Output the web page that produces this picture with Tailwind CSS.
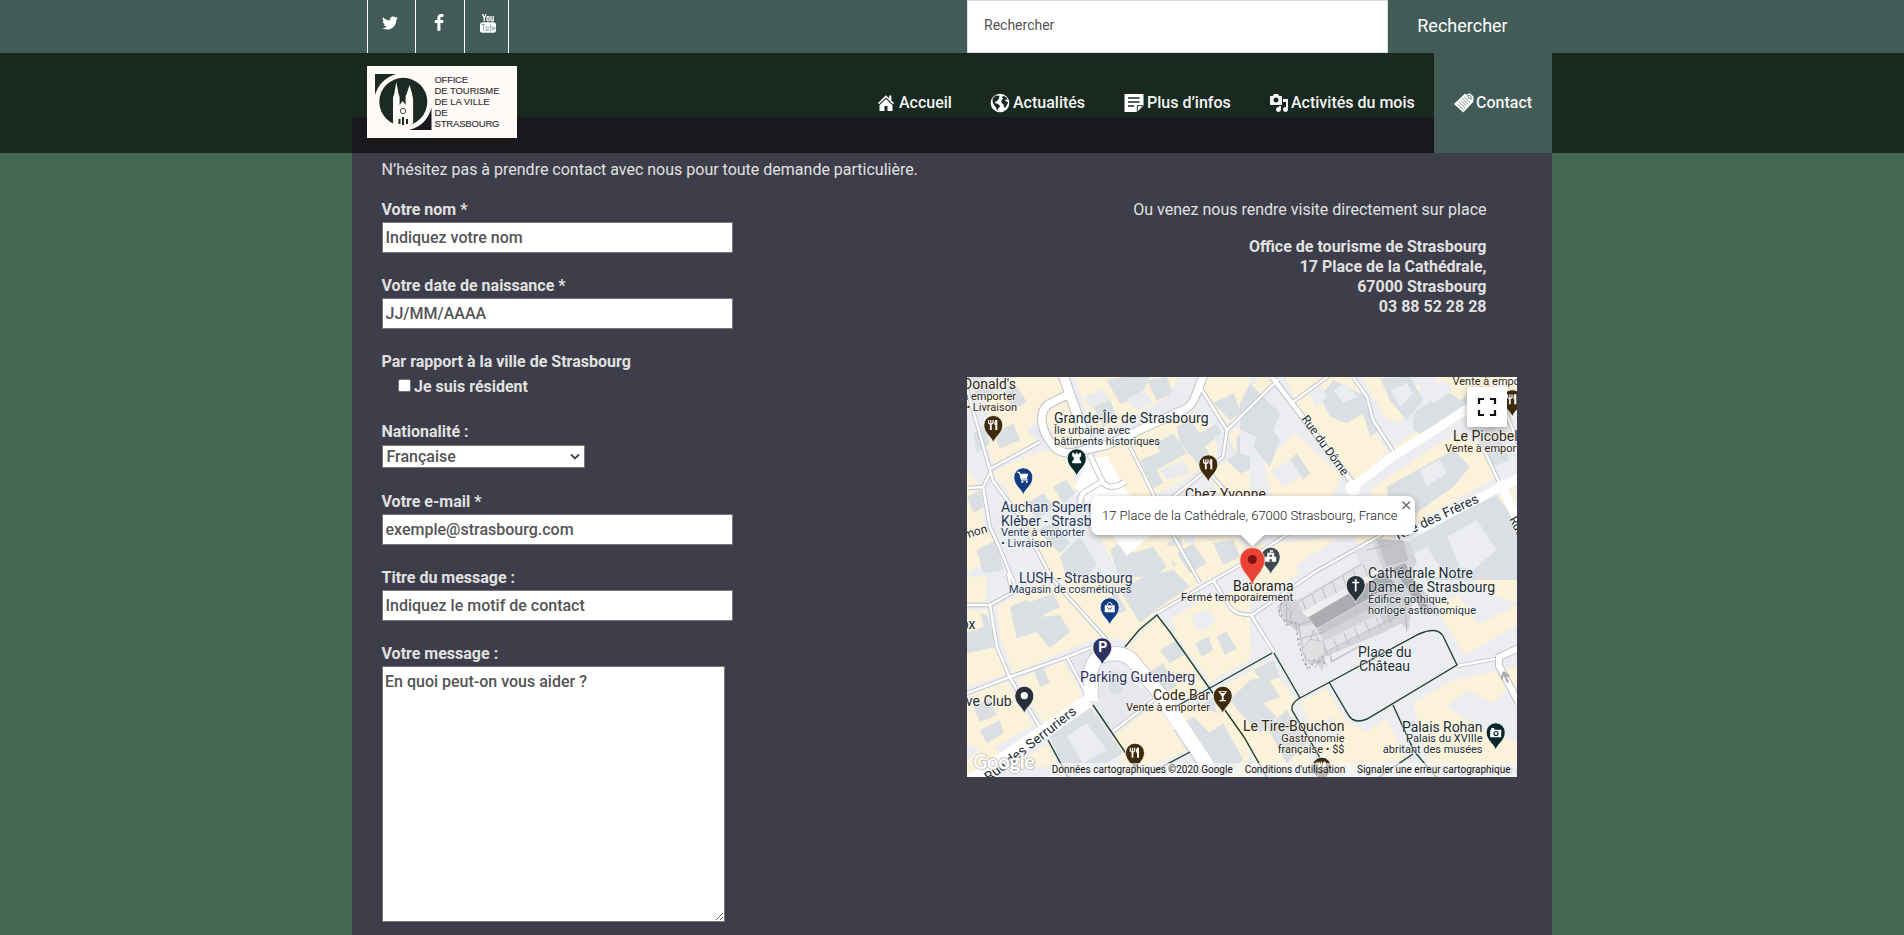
<!DOCTYPE html>
<html lang="fr">
<head>
<meta charset="utf-8">
<title>Contact – Office de tourisme de Strasbourg</title>
<script src="https://cdn.jsdelivr.net/npm/@tailwindcss/browser@4"></script>
</head>
<body class="h-[935px] overflow-hidden bg-[#426852] font-['Roboto',sans-serif] text-base leading-5 text-[#e1e1e1]">

<!-- Top bar -->
<div class="h-[53px] bg-[#425b56]">
  <div class="mx-auto flex h-full w-[1200px] pl-[15px]">
    <div class="flex h-full w-[142px] border-r border-white text-white">
      <a class="flex w-12 justify-center border-l border-white pt-[14px] pr-[3px]"><svg class="h-[18px] w-[18px]" viewBox="0 0 1792 1792" fill="currentColor"><path d="M1684 408q-67 98-162 167 1 14 1 42 0 130-38 259.500t-115.500 248.500-184.500 210.500-258 146-323 54.500q-271 0-496-145 35 4 78 4 225 0 401-138-105-2-188-64.500t-114-159.500q33 5 61 5 43 0 85-11-112-23-185.500-111.500t-73.500-205.500v-4q68 38 146 41-66-44-105-115t-39-154q0-88 44-163 121 149 294.500 238.500t371.500 99.500q-8-38-8-74 0-134 94.500-228.500t228.500-94.500q140 0 236 102 109-21 205-78-37 115-142 178 93-10 186-50z"/></svg></a>
      <a class="flex w-[49px] justify-center border-l border-white pt-[14px] pr-[2px]"><svg class="h-[18px] w-[18px]" viewBox="0 0 1792 1792" fill="currentColor"><path d="M1343 12v264h-157q-86 0-116 36t-30 108v189h293l-39 296h-254v759h-306v-759h-255v-296h255v-218q0-186 104-288.500t277-102.500q147 0 228 12z"/></svg></a>
      <a class="flex flex-1 justify-center border-l border-white pt-[13px]"><svg class="ml-[2px] h-5 w-4" viewBox="0 0 16 20" fill="none"><path d="M2.500 1 4.300 5V8.300M6 1 4.300 5" stroke="#fff" stroke-width="1.300"/><rect x="7" y="3.300" width="2.200" height="4.500" rx="1.100" stroke="#fff" stroke-width="1.200"/><path d="M11 3v4.100q.2 1.200 1.900.1M13.200 3v5.300" stroke="#fff" stroke-width="1.300"/><rect y="9.200" width="16" height="10.500" rx="2.500" fill="#fff"/><path d="M1.500 11.500h3.800M3.400 11.500V18M6.200 13v4.200q.5 1 1.800 0M8.100 13v5M10.300 11v7M10.400 13.700q1.800-1 1.800.8v2q-.2 1.500-1.800.8M13.500 15.400h1.500v-.8q-.7-1.800-1.500 0v2q.7 1.800 1.500 0" stroke="#6f8c9c" stroke-width=".7"/></svg></a>
    </div>
    <form class="ml-auto flex h-full w-[585px]">
      <input class="h-full w-[421px] border border-[#d8dedc] bg-white pb-1 pl-4 text-sm leading-5 text-[#555] placeholder:text-[#555]" placeholder="Rechercher">
      <button type="button" class="h-full w-[149px] pb-[2px] text-lg text-white">Rechercher</button>
    </form>
  </div>
</div>

<!-- Header with navigation -->
<header class="relative z-10 h-[100px] bg-black/60">
  <div class="mx-auto flex h-full w-[1200px] items-start pl-[15px]">
    <svg class="mt-[13px] h-[72px] w-[150px]" viewBox="0 0 150 72">
      <path fill="#fffaf8" d="M0 0h150v72H0z"/>
      <path fill="#1b2a22" d="M8 8h21Q13 13 8 29z"/><path fill="#18191d" d="M64.500 42v22H42Q59 60 64.500 42z"/>
      <circle cx="36.300" cy="35.800" r="24" fill="#1b2a22"/>
      <path fill="#fffaf8" d="M26 57V31l1-2 2.300-13 2.500 13 .8 2v8l3-4 3 4v-9l1-2 3-9 2.500 9 1 5v24q-6 5-12 5-5 0-8.100-5z"/>
      <circle cx="36" cy="45" r="2.700" fill="none" stroke="#1b2a22" stroke-width=".8"/>
      <path d="M32.500 58v-5M36 59v-8M40 58v-5" stroke="#1b2a22" stroke-width="2"/>
      <g font-family="Liberation Sans, sans-serif" font-size="9.500" fill="#333" stroke="#333" stroke-width=".15">
        <text x="67.500" y="16.700" textLength="33.500">OFFICE</text><text x="67.500" y="27.700" textLength="65">DE TOURISME</text><text x="67.500" y="38.700" textLength="55">DE LA VILLE</text><text x="67.500" y="49.700" textLength="13">DE</text><text x="67.500" y="60.700" textLength="65">STRASBOURG</text>
      </g>
    </svg>
    <nav class="ml-auto flex h-full font-medium text-[#f2f4f3]">
      <a class="flex w-[114px] items-center gap-[3px] pl-5"><svg class="h-5 w-5" viewBox="0 0 20 20"><path fill="#fff" d="M15.300 2.500v5L18 10.100l-1 1.200L10 4.500l-7 6.800-1-1.200L10 2.300l3.200 3.100V2.500z"/><path fill="#fff" d="M10 6l6.500 6.200V18h-5v-5h-3v5h-5v-5.800z"/></svg>Accueil</a>
      <a class="flex w-[134px] items-center gap-[3px] pl-5"><svg class="h-5 w-5" viewBox="0 0 20 20"><circle cx="10" cy="10" r="9.300" fill="#fff"/><path fill="#1b2a22" d="m2.500 6.500 1.300-2.600L6.500 2.300l1.400.8 1.300-.6.500.8-1 1.200.8.8-1.200.9-1.200 1.800-1.700.7-.9 1.400 2.300.4 2.600 1.500.6 1.200-1 1.500-1.400 1.600.2 1.500-1-.8-.9-2.500-1.800-2.200-1.200-2.200zM11.700 3.700l2.400-.7 2 1.200 1.500 2.500-1.300-.3-1.200.7.300 1.200 2.200.3.200 2-1.700 2.800-1.400 1.400-.9-.7-.2-2.500-1.700-1.300-.7-2 .8-1.700 1.300-.6-1-1z"/></svg>Actualités</a>
      <a class="flex w-[145px] items-center gap-[3px] pl-5"><svg class="h-5 w-5" viewBox="0 0 20 20"><path fill="#fff" d="M.5 1h19v11.500L13 19H.5z"/><path d="M4 5h11.500M4 9h11.500M4 13h6" stroke="#1b2a22" stroke-width="1.300"/><path d="M19 12.700h-5.700V19" fill="none" stroke="#1b2a22"/></svg>Plus d’infos</a>
      <a class="flex w-[185px] items-center gap-[2px] pl-5"><svg class="h-5 w-5" viewBox="0 0 20 20" fill="currentColor"><path d="M13 11V4c0-.55-.45-1-1-1h-1.670L9 1H5L3.670 3H2c-.55 0-1 .45-1 1v7c0 .55.450 1 1 1h10c.55 0 1-.45 1-1zM7 4.500c1.380 0 2.500 1.120 2.500 2.500S8.380 9.500 7 9.500 4.500 8.380 4.500 7 5.620 4.500 7 4.500zM14 6h5v10.500c0 1.380-1.120 2.500-2.500 2.500S14 17.880 14 16.500s1.120-2.500 2.500-2.500c.17 0 .34.020.5.050V9h-3V6zm-4 8.050V13h2v3.500c0 1.380-1.120 2.500-2.500 2.500S7 17.880 7 16.500 8.120 14 9.500 14c.17 0 .34.020.5.050z"/></svg>Activités du mois</a>
      <a class="flex w-[118px] items-center gap-[2px] bg-[#425b56] pl-5"><svg class="h-5 w-5" viewBox="0 0 20 20"><path fill="#fff" d="M0 11 10.500 1l3.300.5L15.500 0 19.500 3.500l-.3 5.500L9.200 19.500z"/><path d="m3.600 11 5.600 5.600M5.300 9.300l5.600 5.600M7 7.600l5.600 5.500M8.700 5.900l5.600 5.500M10.400 4.200 16 9.700" fill="none" stroke="#425b56" stroke-width=".7"/><path d="m13.500 2.500 3.300.3.700 3.200-2.400-.3z" fill="none" stroke="#425b56" stroke-width=".7"/></svg>Contact</a>
    </nav>
  </div>
</header>

<!-- Page content -->
<main class="mx-auto -mt-9 h-[818px] w-[1200px] bg-[#3d3e49] pt-[43px] pr-[35px] pl-[29px]">
  <p class="pl-[.5px]">N’hésitez pas à prendre contact avec nous pour toute demande particulière.</p>
  <div class="mt-5 flex justify-between">
    <form class="flex w-[360px] flex-col pl-[.5px] font-bold">
      <label>Votre nom *</label>
      <input class="mt-[2px] ml-[.5px] h-[31px] w-[351px] border border-[#767676] bg-white px-[2.500px] font-medium placeholder:text-[#555]" placeholder="Indiquez votre nom">
      <label class="mt-[23px]">Votre date de naissance *</label>
      <input class="mt-[2px] ml-[.5px] h-[31px] w-[351px] border border-[#767676] bg-white px-[2.500px] font-medium placeholder:text-[#555]" placeholder="JJ/MM/AAAA">
      <label class="mt-[23px]">Par rapport à la ville de Strasbourg</label>
      <label class="mt-[5px] flex items-center gap-[3px] pl-[16.500px]"><input type="checkbox" class="mt-[-3px] h-[13px] w-[13px] appearance-none rounded-[2px] border border-[#767676] bg-white">Je suis résident</label>
      <label class="mt-[25px]">Nationalité :</label>
      <div class="mt-[3px] ml-[.5px] flex h-[23px] w-[203px] items-center justify-between border border-[#767676] bg-white pr-[4px] pl-[3.500px] font-medium text-[#555]"><span>Française</span><svg class="h-2 w-[10px]" viewBox="0 0 10 8"><path d="m1 1.500 4 4 4-4" fill="none" stroke="#444" stroke-width="1.800"/></svg></div>
      <label class="mt-6">Votre e-mail *</label>
      <input class="mt-[2px] ml-[.5px] h-[31px] w-[351px] border border-[#767676] bg-white px-[2.500px] font-medium placeholder:text-[#555]" placeholder="exemple@strasbourg.com">
      <label class="mt-[23px]">Titre du message :</label>
      <input class="mt-[2px] ml-[.5px] h-[31px] w-[351px] border border-[#767676] bg-white px-[2.500px] font-medium placeholder:text-[#555]" placeholder="Indiquez le motif de contact">
      <label class="mt-[23px]">Votre message :</label>
      <textarea class="mt-[2px] ml-[.5px] h-[256px] w-[343px] resize border border-[#767676] bg-white px-[2px] py-[5px] font-medium placeholder:text-[#555]" placeholder="En quoi peut-on vous aider ?"></textarea>
    </form>

    <div class="w-[550px]">
      <div class="pr-[30.500px] text-right">
        <p>Ou venez nous rendre visite directement sur place</p>
        <p class="mt-[17px] font-bold">Office de tourisme de Strasbourg<br>17 Place de la Cathédrale,<br>67000 Strasbourg<br>03 88 52 28 28</p>
      </div>
      <div class="relative mt-[60px] h-[400px] w-[550px] overflow-hidden">
        <svg class="block h-[400px] w-[550px]" viewBox="0 0 550 400" font-family="Roboto, sans-serif">
          <defs>
            <g id="pin"><path d="M0 18C-1.500 11.500-9.500 8.500-9.500 0A9.500 9.500 0 1 1 9.500 0C9.500 8.500 1.500 11.500 0 18z" stroke="#fff" stroke-width=".8"/></g>
            <g id="fork" fill="none" stroke="#fff"><path d="M-2.500-1V5" stroke-width="1.800"/><path d="M-4.700-5v3.200q2.200 2.400 4.400 0V-5M-2.500-5v4" stroke-width="1.200"/><path d="M3-5V5" stroke-width="2"/><path d="M2.500-5q-1.500 2-.8 5" stroke-width="1"/></g>
            <filter id="sh" x="-20%" y="-50%" width="140%" height="220%"><feDropShadow dx="0" dy="2" stdDeviation="3" flood-opacity=".35"/></filter>
          </defs>
          <path fill="#ecedf0" d="M0 0h550v400H0z"/>

          <!-- commercial blocks, north-west -->
          <g transform="translate(-7 -7) scale(.33333)">
            <path fill="#fbf2d9" d="M60 60 170 21h120l25 45-85 50 10 90-140 80-20-70 40-20-45-110zM95 310l100-50 90-25 55 60 10 60-60 50-60-20-30 60-40-30-20-60zM21 300l40 50 10 110 50 90-100 60zM255 120l80-30 30 130-60 20-40-60zM345 21h310l-30 60-200 110-30-20zM390 260l250-110 60-20 80 50-10 80-130 90-160 60-60-60zM735 21h135v100l-70 40-70-100zM810 190l60-40v250h-80l-40-80 50-60zM420 500h250l60 130H560l-100-50zM180 440l90 60 120 130H270zM700 500h130l40 50-130 80z"/>
            <path fill="#dadfe3" d="M21 21h45l40 50-50 20zM120 60l40-25 40 60-40 25zM100 190l60-30 20 50-60 25zM440 30l50-9h80l-30 60-60 20zM560 30l60-9 20 50-50 20zM400 110l50-20 20 50-40 30zM540 270l60-25-10-25 50-30 40 60-90 50 20 40-30 15zM650 170l40-20 30 40 50-30 15 30-50 40 25 40-40 20-60-70zM760 100l60-30 25 60-35 20zM830 200l40-20v120l-30 10-40-40 30-25zM40 190l30-20 20 50-40 30zM200 400l50-30 30 40-50 40zM280 350l40-20 25 40-35 30zM230 480l50-20 50 60-30 30zM300 560l60-60 50 80-30 50h-60zM450 540l50-40 20 50 60-20 40 60-50 40h-90zM620 520l40-20 30 70-50 20zM21 380l40-20 10 50-30 20zM50 540l60-30 20 90-60 10zM730 560l50-30 20 40-50 30z"/>
            <path fill="#e9ebee" d="M200 180l50-40 35 60-50 20zM370 80l60-20 20 30-60 20zM500 90l50-30 30 40-50 20zM600 300l70-30 20 40-70 20zM80 450l60-30 20 60-60 20zM420 430l50-20 20 40-40 20zM640 60l40 10-30 50-60 30-10-30zM100 60l20-30 30 10-20 40zM760 200l40-10 30 60-40 30z"/>
          </g>
          <path fill="#fff" d="m108 110 12-27 20-4 18 33 32 40-30 27-25-35z"/>

          <!-- north-east -->
          <g transform="translate(273 -7) scale(.33333)">
            <path fill="#fbf2d9" d="M0 90 60 21h20l30 20L0 140zM135 21h200l40 70 20 80 50 75-85 75-30 10-140-190zM365 21h60l120 30-20 50-50 60-40-20zM590 21h241v60l-70 10-210 120-50 30-40-10 130-90zM75 280l90-90 140 130-30 60-180 10zM390 360l190-130 80-40 80 60 30 70-210 120-70 50H430zM440 490l20 20-70 60-50-70zM600 510l50-30-20-20 200-110v350l-100-40zM0 530l300-30-170 110-50-30z"/>
            <path fill="#dadfe3" d="M0 100l30-60 90 90-20 50 20 30-30 80-50-60H0zM240 80l40-50 100 50-10 50-50 30-50-20zM360 100l30 10 30 70-30 20zM420 25l90-4 40 70-50 60-50-60zM520 130l100-70 40 30 60-30 30 30-190 110-40-20zM150 270l20-20 40 60-20 20zM440 350l200-110 50 50-50 60-140 100-50-20zM700 190l60-20 50 100-50 20zM480 530l230-130 50-40 71 100v170H560zM310 90l30-15 30 35-40 30z"/>
            <path fill="#ecedf0" d="M280 60l40-20 30 40-40 20zM450 60l50-20 20 30-40 40zM540 300l60-30 20 40-60 40zM620 500l90-50 60 90-70 60-40-10zM510 560l50-30 60 90h-70zM0 180l50 20-20 60-30-10zM200 60l40-20 20 40-30 30zM560 60l50-30 30 30-60 40zM90 300l60-30 30 50-50 30z"/>
          </g>

          <!-- south-west -->
          <g transform="translate(-7 193) scale(.33333)">
            <path fill="#fbf2d9" d="M21 20h60l-5 75-55 5zM110 110l130-70 50 10 130 150-120 50-140 60-40-110zM21 120h60l20 100 35 95-115 35zM21 380l120-45 80 130-140 80-60-20zM170 330l140-55 55 90-15 50-100 40zM290 20h420l20 15-150 100-70 80-50-10-30 5zM500 240l90-100 50 60 100 150-80 40-90-50zM640 190l60-70 170-80v230l-120 60zM620 420l240-20 10 220h-90zM440 520l140-120 110 140-180 70-40-60zM21 570l60-50 60 40-90 60H21zM170 580l90-60 40 70h-130z"/>
            <path fill="#dadfe3" d="M21 190l50-20-10-40 20 5 30 95-90 20zM150 110l50-20 50 50 50-5 30 50-60 50-40-50-60 20zM200 100l80-30 20 40-60 30zM480 60l70-40 90-20 50 50-90 60-60 50zM430 90l40-20 30 50-40 20zM600 240l50-30 30 40-50 30zM700 230l50-40 30 60-60 20zM730 240l60-30 30 40-60 30zM270 500l120-90 100 140-70 40H310zM640 480l60-40 60 60-10 50 50 70h-70zM560 310l50-30 40 70-50 20zM40 410l50-25 20 50-50 20zM60 480l60-30 10 40-50 30zM220 300l30-10 20 50-30 10z"/>
            <path fill="#ecedf0" d="M320 500l60-40 60 80-70 40zM690 150l60-35 30 50-60 30zM460 400l60-50 60 60-100 70z"/>
            <path fill="#e6e8eb" d="M335 270l60-30 20 50-40 50zM420 330l50-40 100 90-130 110-30-60z"/><circle cx="467" cy="350" r="21" fill="#dadfe3"/>
          </g>

          <!-- south-east -->
          <g transform="translate(153 163) scale(.33333)">
            <path fill="#fbf2d9" d="M150 240l120-80 130 170-130 100zM130 20l220-20 10 70-90 45-60 20zM380 100l120-60 40 60-140 90zM280 455l160-90 90 120-20 30 70 170H430l-60-110zM540 485l80-40 60 100 60 30 60-40 60 120-220 40zM880 490l120-70 300-60v330H930zM945 200l70-35 60 90 150-80v60l-190 110z"/>
            <path fill="#dadfe3" d="M170 40l50-30 40 60-50 30zM280 10l60-10 20 50-50 25zM225 310l40-20 15 40-35 20zM290 290l30-15 30 50-35 20zM330 480l60-60 50-10 40 60-50 20 40 40-50 50-60-60zM400 390l60-30 20 50-50 20zM440 560l60-50 60 100-60 60zM250 590l60-40 60 110-40 30h-50zM240 500l40-30 10 50z"/>
            <path fill="#ecedf0" d="M210 230l50-25 30 40-50 30zM980 500l60-50 80 40 60-60 120 90-100 90-110-40zM560 560l80-30 30 60-80 30z"/>
          </g>

          <!-- streets: grey casing then white surface -->
          <g fill="none" stroke-linejoin="round">
            <g stroke="#bfc3c7">
              <path stroke-width="11" d="M96-3 103 18 122 70"/>
              <path stroke-width="9.500" d="M104 16 84 26Q74 30 75 45 77 58 85 67 92 77 105 76L140 68 218 32Q226 28 230 15L237-3"/>
              <path stroke-width="4.300" d="M-2 5 23 93 26 104 53 140 85 202 140 263M1 111l15-1 7-14M16 110l7 40 10 22 14 34M-2 228h25l22-12-4-20M23 228l7 42 13 31 30 49M-2 317l45-17 57-20 36-14M100 280l18 34M23 92l50-27M233 10l27 43-4 27-50 40M260 53 312 2M243 96l22 26M163 70l15 30 28 58 27 48M326 25 363-2M386 0l14 20 6 23 20 31M190 236l83-48 80-52M246 203l17 27q5 8 22 8l63-43 75-42M284 238l23 37M145 355l42-32M490 289l38-7M518 75l14 30M538 33l16 40"/>
              <path stroke-width="6.500" d="M305 0 385 105M123 78l13 28M113 130q-1-14 8-17l15-9M136 106q8 8 22-1"/>
              <path stroke-width="15" d="M124 321v-27q2-14 15-16 20-5 30 10l24 29"/>
              <path stroke-width="8" d="m552 271-20 9 0 9 20 37"/>
            </g>
            <g stroke="#fff">
              <path stroke-width="9" d="M96-3 103 18 122 70"/>
              <path stroke-width="7.500" d="M104 16 84 26Q74 30 75 45 77 58 85 67 92 77 105 76L140 68 218 32Q226 28 230 15L237-3"/>
              <path stroke-width="2.500" d="M-2 5 23 93 26 104 53 140 85 202 140 263M1 111l15-1 7-14M16 110l7 40 10 22 14 34M-2 228h25l22-12-4-20M23 228l7 42 13 31 30 49M-2 317l45-17 57-20 36-14M100 280l18 34M23 92l50-27M233 10l27 43-4 27-50 40M260 53 312 2M243 96l22 26M163 70l15 30 28 58 27 48M326 25 363-2M386 0l14 20 6 23 20 31M190 236l83-48 80-52M246 203l17 27q5 8 22 8l63-43 75-42M284 238l23 37M145 355l42-32M490 289l38-7M518 75l14 30M538 33l16 40"/>
              <path stroke-width="4.500" d="M305 0 385 105M123 78l13 28M113 130q-1-14 8-17l15-9M136 106q8 8 22-1"/>
              <path stroke-width="9" d="M386 110 425 80 463 56 500 32 552-2M430 163l122-62M533 104l22 50"/>
              <path stroke-width="13.500" d="M3 405 121 324M124 324v-30q2-14 15-16 20-5 30 10l24 29 50 75"/>
              <path stroke-width="6" d="m552 271-20 9 0 9 20 37"/>
            </g>
            <circle cx="386" cy="111" r="7.500" fill="#fff"/>
            <path d="m534.500 302.500 2-7 5.500 4M536.500 295.500l4.500 10" stroke="#a7aaae" stroke-width="2.200"/>
          </g>

          <!-- cathedral in relief -->
          <g transform="translate(153 163) scale(.33333)">
            <path fill="#d3d4d9" d="M470 200l35-25 30 5 190-110-5-40 60-35 90 10 20 60-20 40 95 110-15 15-70-50-15 90-20-20-60 30-170 70-8 45-15-25-25 5-20-45-10-50-35-30z"/>
            <path fill="#e3e3e7" d="M530 180l210-120 20 30-210 130zM600 310l230-115 15 28-225 115zM700 30l60-20 30 80-50 20zM540 260l55-10 20 75-45 35-30-30z"/>
            <path fill="#ababb2" d="M560 225l230-130 35 35-235 135zM820 85l35-15 80 150-20 5z"/>
            <path fill="#f0efef" d="M545 218l230-132 15 14-225 132z"/>
            <path fill="#c6c6cc" d="M590 268l235-132 10 22-232 126z"/>
            <path fill="#c2c3c9" d="M770 0h80l15 60-65 20z"/>
            <path fill="#cfd0d5" d="M775 215l80-50 10 50-70 45z"/>
            <g fill="none" stroke="#b3b4bb" stroke-width="2.500"><path d="M545 175l12 35M575 160l12 33M606 143l12 33M637 126l12 33M668 108l12 33M700 90l12 33M730 73l12 33M610 310l14 36M640 296l14 34M672 280l14 34M704 264l14 34M736 247l14 34M768 231l14 34M800 215l14 34"/><path d="M485 185l-8 40 30 30 8-40zM500 180v70M490 240l45 10 8 50 20 90M560 350l20-80 30 60-25 55M520 260l60-20M530 300l85-25M590 370l20-12 10 20M800 195l55-20 5 100M740 30l90-20M533 186 725 72M612 338l220-110"/><path d="m630 340 5 25 85-48" stroke="#c6c7cc" stroke-width="5"/></g>
            <path fill="#dfe1e1" stroke="#b5b6bb" stroke-width="2" d="M545 330l25-32 40 7 6 35-30 25-25-5z"/>
            <path fill="none" stroke="#a6a7ae" stroke-width="4" stroke-dasharray="7 9" d="M475 210l25 45 25-10 12 70 15 55 20 15 10-25 30 10-5-30M510 170l-30 25"/>
          </g>

          <!-- pedestrian limits -->
          <g fill="none" stroke="#21442f" stroke-width="1.400">
            <path d="m158 270 14-17 18-15 13 17 40 57 17 24 17 24 25 44"/>
            <path d="m305 276-62 35-33 18M307 276l26 45M356 386l-31-53q-1-7 8-12l28-15 91-49q18-8 24 2l14 29-90 54q-12 5-18-3l-20-34M426 328l21 46 22 26M446 377l-34 23M126 328l34 50M81 363l20 37M223 375l-36 19"/>
          </g>

          <!-- markers -->
          <g>
            <g transform="translate(26.300 48)" fill="#3f2a09"><use href="#pin"/><use href="#fork"/></g>
            <g transform="translate(241.300 87.300)" fill="#3f2a09"><use href="#pin"/><use href="#fork"/></g>
            <g transform="translate(545.300 22.300)" fill="#3f2a09"><use href="#pin"/><use href="#fork"/></g>
            <g transform="translate(168 375.700)" fill="#3f2a09"><use href="#pin"/><use href="#fork"/></g>
            <g transform="translate(354.700 389.700)" fill="#3f2a09"><use href="#pin"/><use href="#fork"/></g>
            <g transform="translate(109.700 81.300)" fill="#04282c"><use href="#pin"/><path fill="#fff" d="M-4.500-5.500h2v1.500h1.500v-1.500h2v1.500h1.500v-1.500h2v3.500l-1.500 1v2.500l1.500 1.500v2h-9v-2l1.500-1.500V-1l-1.500-1z"/></g>
            <g transform="translate(56.300 100.300)" fill="#123b80"><use href="#pin"/><path fill="#fff" d="M-3.500-3.500h8.500l-1.500 5h-6z"/><path d="M-6-5h2l2.500 7.500h6" fill="none" stroke="#fff" stroke-width="1.200"/><circle cx="-1" cy="4.500" r="1.100" fill="#fff"/><circle cx="3.500" cy="4.500" r="1.100" fill="#fff"/></g>
            <g transform="translate(303.700 179.700)" fill="#3e4a4d"><use href="#pin"/><path fill="#fff" d="M-5.500 5V0h2v-4h2.800v-2.500H2.500v1.500H.3v1h3.200v4h2v5z"/><path fill="#3e4a4d" d="M-1.200-2h2.400v2h-2.400zM-1.200 2.500h2.400V5h-2.400z"/></g>
            <g transform="translate(388.700 208)" fill="#27303a"><use href="#pin"/><path d="M0-6V6.500M-3.500-2.500h7" stroke="#fff" stroke-width="1.700"/></g>
            <g transform="translate(142.700 230.300)" fill="#123b80"><use href="#pin"/><path fill="#fff" d="M-5-2h10v7H-5z"/><path d="M-2.300-2v-1.500q2.300-3 4.600 0V-2" fill="none" stroke="#fff"/><path d="M-2.200 0q2.200 4 4.400 0" fill="none" stroke="#123b80"/></g>
            <g transform="translate(135.300 270.300)" fill="#2d3260"><use href="#pin"/><text x="-4" y="5" font-size="14" font-weight="700" fill="#fff">P</text></g>
            <g transform="translate(57.300 318.700)" fill="#27303a"><use href="#pin"/><circle r="3.600" fill="#fff"/></g>
            <g transform="translate(255.700 318.700)" fill="#3f2a09"><use href="#pin"/><path d="M-4.500-4.500h9L.9.500v3.700h2.300v1.300h-6.400V4.200h2.300V.5z" fill="#fff"/><path d="M-2-3.200h4" stroke="#3f2a09"/></g>
            <g transform="translate(528.700 355.300)" fill="#04282c"><use href="#pin"/><path fill="#fff" d="M-5.500-2.500h1v-1.800h3v1.800h7v7.500h-11z"/><circle cx=".3" cy="1.200" r="2.600" fill="#04282c"/><circle cx=".3" cy="1.200" r="1.400" fill="#fff"/></g>
          </g>

          <!-- labels -->
          <g paint-order="stroke" stroke="#fff" stroke-opacity=".6" stroke-width="1.600" stroke-linejoin="round" fill="#202c33" font-size="14">
            <g fill="#33270f"><text x="49" y="12" text-anchor="end">McDonald's</text><g font-size="11"><text x="49" y="23" text-anchor="end">Vente à emporter</text><text x="50" y="34" text-anchor="end">• Livraison</text></g></g>
            <text x="87" y="45.500" textLength="154.500">Grande-Île de Strasbourg</text>
            <g font-size="11"><text x="87" y="57" textLength="76">Île urbaine avec</text><text x="87" y="68" textLength="106">bâtiments historiques</text></g>
            <g fill="#1d3557"><text x="34" y="134.500">Auchan Supermarché</text><text x="34" y="148.500">Kléber - Strasbourg</text><g font-size="11"><text x="34" y="159" textLength="84">Vente à emporter</text><text x="34" y="170" textLength="51">• Livraison</text></g>
            <text x="52" y="205.500" textLength="113.500">LUSH - Strasbourg</text><text x="42" y="216" font-size="11" textLength="122.500">Magasin de cosmétiques</text></g>
            <text x="218" y="121.500" fill="#33270f" textLength="81">Chez Yvonne</text>
            <text x="21" y="155" text-anchor="end" transform="rotate(-17 21 155)" font-size="12">Salomon</text>
            <text x="8.500" y="251.500" text-anchor="end">Fox</text>
            <text x="113" y="304.500" fill="#2d3260" textLength="115">Parking Gutenberg</text>
            <text x="44.500" y="328.500" text-anchor="end">Live Club</text>
            <g fill="#33270f"><text x="186" y="322.500" textLength="57">Code Bar</text><text x="159" y="334" font-size="11" textLength="84">Vente à emporter</text></g>
            <g fill="#222"><text x="266" y="213.500" textLength="60.500">Batorama</text><text x="214" y="224" font-size="11" textLength="112">Fermé temporairement</text></g>
            <text x="401" y="200.500" textLength="105">Cathédrale Notre</text><text x="401" y="214.500" textLength="127">Dame de Strasbourg</text><g font-size="11"><text x="401" y="226" textLength="81">Édifice gothique,</text><text x="401" y="237" textLength="108">horloge astronomique</text></g>
            <text x="391" y="279.500" textLength="53.500">Place du</text><text x="392" y="293.500" textLength="51">Château</text>
            <g fill="#33270f"><text x="276" y="353.500" textLength="101.500">Le Tire-Bouchon</text><g font-size="11"><text x="377.500" y="365" text-anchor="end">Gastronomie</text><text x="377.500" y="376" text-anchor="end">française • $$</text></g>
            <text x="486" y="63.500">Le Picobello</text><g font-size="11"><text x="478" y="75">Vente à emporter</text><text x="485.500" y="8">Vente à emporter</text></g></g>
            <text x="435" y="354.500" textLength="80.500">Palais Rohan</text><g font-size="11"><text x="515.500" y="365" text-anchor="end">Palais du XVIIIe</text><text x="515.500" y="376" text-anchor="end">abritant des musées</text></g>
            <g font-size="12"><text transform="translate(334 42) rotate(54)" textLength="71">Rue du Dôme</text><text transform="translate(431 163) rotate(-25)" textLength="90" font-size="13.500">Rue des Frères</text><text transform="translate(542 142) rotate(63)">Rue</text><text transform="translate(22 405) rotate(-38)" textLength="112" font-size="13.500">Rue des Serruriers</text></g>
            <text x="474" y="398" font-size="13.700" fill="#999">Embarcadère</text>
          </g>

          <!-- attribution strip -->
          <path fill="#f5f5f5" fill-opacity=".7" d="M83 386h467v14H83z"/>
          <text x="6" y="392" font-family="Lato, sans-serif" font-weight="700" font-size="20" textLength="62" fill="#fff" stroke="#aaa" stroke-width="1.200" paint-order="stroke">Google</text>
          <g font-size="10" fill="#111"><text x="84.700" y="396" textLength="181">Données cartographiques ©2020 Google</text><text x="277.700" y="396" textLength="100.500">Conditions d'utilisation</text><text x="390" y="396" textLength="153.500">Signaler une erreur cartographique</text></g>

          <!-- address bubble and main marker -->
          <path filter="url(#sh)" fill="#fff" d="M132 119h308a8 8 0 0 1 8 8v23a8 8 0 0 1-8 8H297l-11.500 11L274 158H132a8 8 0 0 1-8-8v-23a8 8 0 0 1 8-8z"/>
          <text x="135" y="143.300" font-size="13" font-weight="300" fill="#222" textLength="295.500">17 Place de la Cathédrale, 67000 Strasbourg, France</text>
          <path d="m435.500 124.500 7.500 7.500m0-7.500-7.500 7.500" stroke="#666" stroke-width="1.300"/>
          <path d="M285.300 210c-1-11-12.500-15-12.500-27a12.500 12.500 0 0 1 25 0c0 12-11.500 16-12.500 27z" fill="#ea4335" stroke="#fff" stroke-width=".6"/><circle cx="285.300" cy="182.500" r="4.500" fill="#811411"/>

          <!-- fullscreen control -->
          <rect x="500" y="10" width="40" height="40" rx="2" fill="#fff" filter="url(#sh)"/>
          <path d="M512 27v-5h5M523 22h5v5M528 33v5h-5M517 38h-5v-5" fill="none" stroke="#111" stroke-width="2.200"/>
        </svg>
      </div>
    </div>
  </div>
</main>
</body>
</html>
